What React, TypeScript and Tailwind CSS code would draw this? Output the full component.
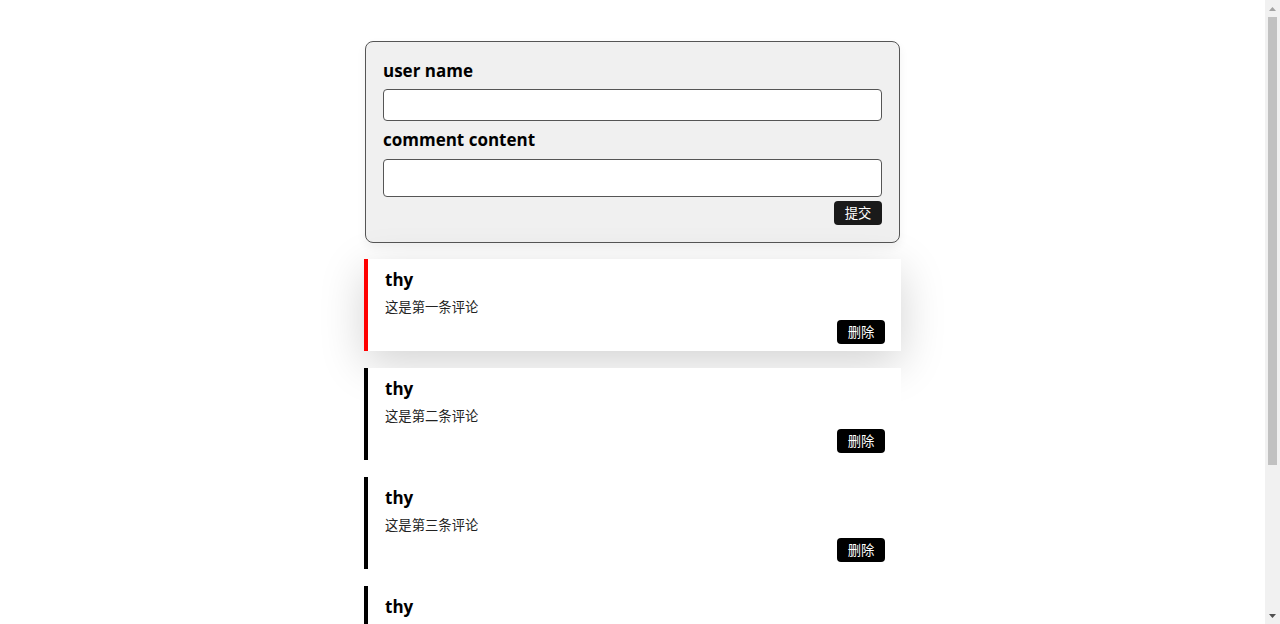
import React from "react";

const comments = [
  { name: "thy", text: "这是第一条评论" },
  { name: "thy", text: "这是第二条评论" },
  { name: "thy", text: "这是第三条评论" },
  { name: "thy", text: "这是第四条评论" },
  { name: "thy", text: "这是第五条评论" },
];

export default function App() {
  return (
    <div
      className="h-[624px] flex bg-white text-black overflow-hidden"
      style={{ fontFamily: '"Open Sans", "Noto Sans CJK SC", sans-serif' }}
    >
      <div className="flex-1 overflow-hidden">
        <div className="mx-auto w-[537px] pt-[41px] pb-[34px] flex flex-col">
          <div className="mx-[1px] rounded-[8px] border border-[#555] bg-[#f0f0f0] px-[17px] pt-[16px] pb-[17px] shadow-[0_4px_10px_rgba(0,0,0,0.06)]">
            <div className="text-[17px] font-bold leading-[26px]">user name</div>
            <input className="mt-[5px] block w-full h-[32px] rounded-[4px] border border-[#555] bg-white" />
            <div className="mt-[6px] text-[17px] font-bold leading-[26px]">comment content</div>
            <textarea className="mt-[6px] block w-full h-[38px] rounded-[4px] border border-[#555] bg-white resize-none" />
            <div className="mt-[4px] flex justify-end">
              <button className="h-[24px] w-[48px] rounded-[4px] bg-[#1a1a1a] text-white text-[13.33px] leading-[24px]">
                提交
              </button>
            </div>
          </div>
          <div className="mt-[16px] flex flex-col gap-[17px]">
            {comments.map((c, i) => (
              <div
                key={i}
                className={`h-[92px] border-l-4 bg-white pl-[17px] pr-[16px] pt-[9px] flex flex-col ${
                  i === 0
                    ? "border-[#ff0000] shadow-[0_12px_45px_rgba(0,0,0,0.18)]"
                    : "border-black"
                }`}
              >
                <div className="text-[17px] font-bold leading-[24px]">{c.name}</div>
                <div className="mt-[5px] text-[13.33px] leading-[20px] text-[#222]">{c.text}</div>
                <div className="mt-[3px] flex justify-end">
                  <button className="h-[24px] w-[48px] rounded-[4px] bg-black text-white text-[13.33px] leading-[24px]">
                    删除
                  </button>
                </div>
              </div>
            ))}
          </div>
        </div>
      </div>
      <div className="w-[15px] h-full bg-[#f1f1f1] flex flex-col items-center">
        <div className="h-[17px] w-full flex items-center justify-center">
          <svg width="7" height="4" viewBox="0 0 7 4">
            <path d="M0 4 L3.5 0 L7 4 Z" fill="#a3a3a3" />
          </svg>
        </div>
        <div className="h-[448px] w-[9px] bg-[#c1c1c1]" />
        <div className="flex-1" />
        <div className="h-[17px] w-full flex items-center justify-center">
          <svg width="7" height="4" viewBox="0 0 7 4">
            <path d="M0 0 L7 0 L3.5 4 Z" fill="#505050" />
          </svg>
        </div>
      </div>
    </div>
  );
}
